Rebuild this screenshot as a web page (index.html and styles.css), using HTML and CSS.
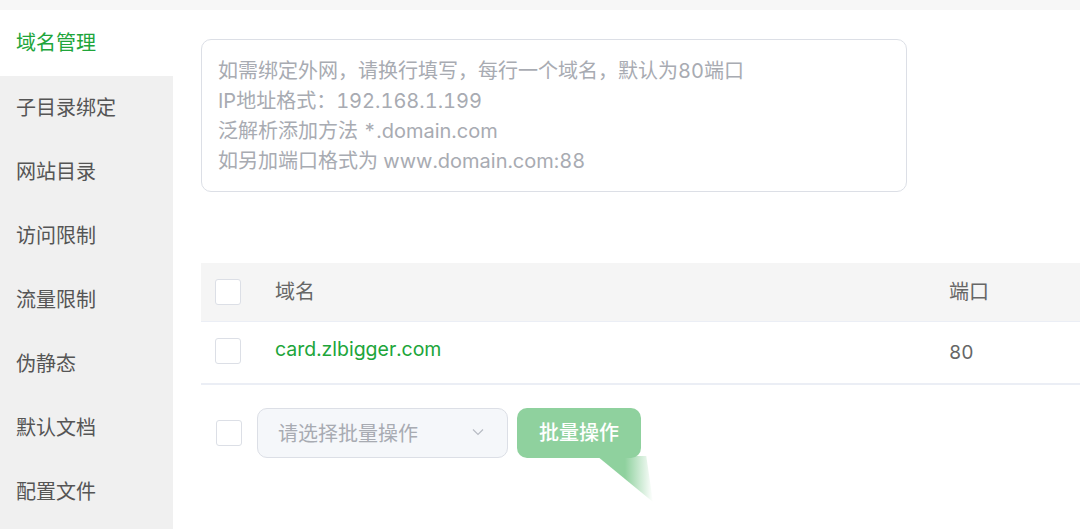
FILE: index.html
```html
<!DOCTYPE html>
<html lang="zh-CN">
<head>
<meta charset="utf-8">
<title>域名管理</title>
<link rel="stylesheet" href="styles.css">
</head>
<body>
<div class="topbar"></div>
<div class="layout">
  <nav class="sidebar">
    <div class="nav-item active">域名管理</div>
    <div class="nav-item">子目录绑定</div>
    <div class="nav-item">网站目录</div>
    <div class="nav-item">访问限制</div>
    <div class="nav-item">流量限制</div>
    <div class="nav-item">伪静态</div>
    <div class="nav-item">默认文档</div>
    <div class="nav-item">配置文件</div>
  </nav>
  <main class="content">
    <div class="textarea">
      <div class="ph">如需绑定外网，请换行填写，每行一个域名，默认为80端口</div>
      <div class="ph">IP地址格式：192.168.1.199</div>
      <div class="ph">泛解析添加方法 *.domain.com</div>
      <div class="ph">如另加端口格式为 www.domain.com:88</div>
    </div>
    <div class="table">
      <div class="row head">
        <div class="cell-check"><span class="checkbox"></span></div>
        <div class="cell-name">域名</div>
        <div class="cell-port">端口</div>
      </div>
      <div class="row body">
        <div class="cell-check"><span class="checkbox"></span></div>
        <div class="cell-name link">card.zlbigger.com</div>
        <div class="cell-port num">80</div>
      </div>
    </div>
    <div class="batch">
      <span class="checkbox"></span>
      <div class="select">
        <span class="select-ph">请选择批量操作</span>
        <svg class="chev" width="14" height="14" viewBox="0 0 14 14"><path d="M2 4.5 L7 9.5 L12 4.5" fill="none" stroke="#b8bcc4" stroke-width="1.2"/></svg>
      </div>
      <div class="btn-wrap">
        <button class="btn">批量操作</button>
        <span class="tail"></span>
      </div>
    </div>
  </main>
</div>
</body>
</html>
```
FILE: styles.css
```css
* { box-sizing: border-box; }
html, body { margin: 0; padding: 0; background: #fff; }
body {
  font-family: Inter, "Noto Sans CJK SC", sans-serif;
  font-variant-numeric: tabular-nums;
  width: 1080px;
  height: 529px;
  overflow: hidden;
}
.topbar { height: 10px; background: #f7f7f7; }
.layout { display: flex; height: 519px; }
.sidebar {
  width: 173px;
  flex: none;
  background: #f0f0f0;
  display: flex;
  flex-direction: column;
}
.nav-item {
  height: 64px;
  padding: 0 0 3px 16px;
  display: flex;
  align-items: center;
  font-size: 20px;
  color: #555;
  font-family: "Noto Sans CJK SC", sans-serif;
}
.nav-item.active {
  height: 66px;
  background: #fff;
  color: #20a53a;
}
.content {
  flex: 1;
  padding: 29px 0 0 28px;
  display: flex;
  flex-direction: column;
}
.textarea {
  width: 706px;
  height: 153px;
  border: 1px solid #dcdfe6;
  border-radius: 10px;
  padding: 16px 16px;
}
.ph {
  font-size: 20px;
  line-height: 30px;
  color: #a8abb2;
  white-space: nowrap;
  font-family: Inter, "Noto Sans CJK SC", sans-serif;
}
.table { margin-top: 71px; width: 920px; }
.row { display: flex; align-items: center; }
.row.head { height: 59px; background: #f5f5f5; border-bottom: 1px solid #ebeef5; padding-bottom: 4px; }
.row.body { height: 63px; border-bottom: 2px solid #ebeef5; padding-bottom: 4px; }
.cell-check { width: 74px; padding-left: 14px; display: flex; }
.row.head .cell-check { padding-top: 4px; }
.cell-name { width: 674px; font-size: 20px; color: #666; font-family: "Noto Sans CJK SC", sans-serif; }
.cell-name.link { color: #20a53a; font-family: Inter, "Noto Sans CJK SC", sans-serif; font-size: 19.5px; padding-bottom: 4px; }
.cell-port { font-size: 20px; color: #666; font-family: "Noto Sans CJK SC", sans-serif; }
.cell-port.num { font-family: Inter, sans-serif; font-size: 19px; padding-top: 4px; }
.checkbox {
  display: inline-block;
  width: 26px;
  height: 26px;
  border: 1.5px solid #dcdfe6;
  border-radius: 3px;
  background: #fff;
}
.batch {
  margin-top: 23px;
  display: flex;
  align-items: center;
  padding-left: 15px;
}
.select {
  margin-left: 15px;
  width: 251px;
  height: 50px;
  border: 1px solid #dcdfe6;
  border-radius: 10px;
  background: #f5f7fa;
  display: flex;
  align-items: center;
  justify-content: space-between;
  padding: 0 22px 2px 20px;
}
.select-ph { font-size: 20px; color: #a8abb2; font-family: "Noto Sans CJK SC", sans-serif; }
.chev { display: block; }
.btn-wrap { position: relative; margin-left: 9px; }
.btn {
  width: 124px;
  height: 50px;
  border: none;
  border-radius: 10px;
  background: #8fd19e;
  color: #fff;
  font-size: 20px;
  font-weight: 500;
  font-family: "Noto Sans CJK SC", sans-serif;
  padding: 0 0 3px;
  display: block;
}
.tail {
  position: absolute;
  left: 80px;
  top: 48px;
  width: 56px;
  height: 46px;
  background: linear-gradient(90deg, #8fd19e 0%, #8fd19e 50%, rgba(143,209,158,0) 100%);
  clip-path: polygon(0 0, 88% 0, 100% 100%);
}
```
